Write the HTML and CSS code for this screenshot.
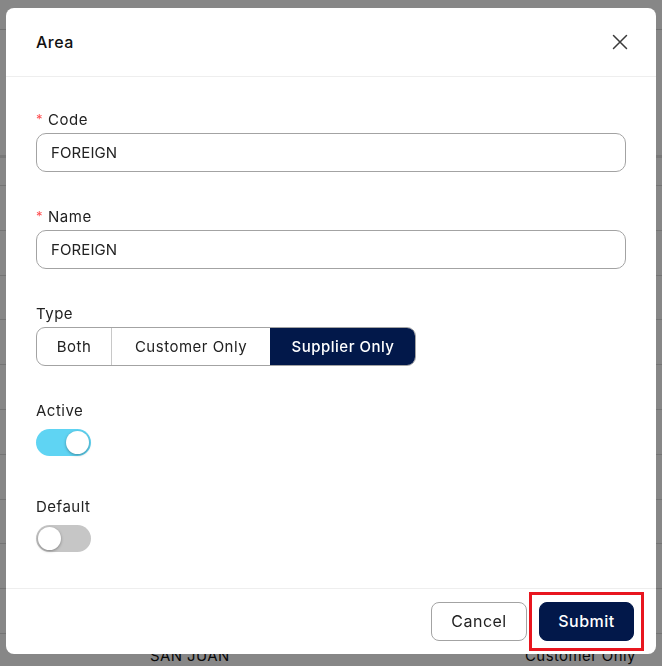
FILE: index.html
```html
<!DOCTYPE html>
<html lang="en">
<head>
<meta charset="utf-8">
<title>Area</title>
<link rel="stylesheet" href="styles.css">
</head>
<body>
<div class="page">
  <div class="page-head"><h1 class="page-title">Areas</h1></div>
  <div class="table">
    <div class="thead"></div>
    <div class="row row-first"></div>
    <div class="row"></div>
    <div class="row"></div>
    <div class="row"></div>
    <div class="row"></div>
    <div class="row"></div>
    <div class="row"></div>
    <div class="row"></div>
    <div class="row"></div>
    <div class="row"></div>
    <div class="row"></div>
    <div class="row row-last"><span class="cell-name">SAN JUAN</span><span class="cell-type">Customer Only</span></div>
  </div>
</div>

<div class="overlay"></div>

<div class="modal">
  <div class="modal-header">
    <span class="modal-title">Area</span>
    <svg class="close" width="16" height="16" viewBox="0 0 16 16"><path d="M1.5 1.5 L14.5 14.5 M14.5 1.5 L1.5 14.5" stroke="#3a3a3a" stroke-width="1.5" fill="none" stroke-linecap="round"/></svg>
  </div>
  <div class="modal-body">
    <div class="field">
      <label class="label"><span class="req">*</span>Code</label>
      <div class="input">FOREIGN</div>
    </div>
    <div class="field">
      <label class="label"><span class="req">*</span>Name</label>
      <div class="input">FOREIGN</div>
    </div>
    <div class="field">
      <label class="label">Type</label>
      <div class="segments">
        <span class="seg seg-both">Both</span>
        <span class="seg seg-customer">Customer Only</span>
        <span class="seg seg-supplier seg-on">Supplier Only</span>
      </div>
    </div>
    <div class="field field-switch">
      <label class="label">Active</label>
      <span class="switch switch-on"><span class="knob"></span></span>
    </div>
    <div class="field field-switch last">
      <label class="label">Default</label>
      <span class="switch"><span class="knob"></span></span>
    </div>
  </div>
  <div class="modal-footer">
    <button class="btn btn-cancel">Cancel</button>
    <button class="btn btn-submit">Submit</button>
  </div>
</div>
</body>
</html>
```
FILE: styles.css
```css
* { box-sizing: border-box; }
html, body { margin: 0; padding: 0; }
body {
  width: 662px;
  height: 666px;
  overflow: hidden;
  background: #fff;
  font-family: Inter, "Open Sans", sans-serif;
  color: #222;
}

.page-head {
  display: flow-root;
  height: 30px;
  border-bottom: 1px solid #d6d6d6;
}
.page-title {
  margin: -17px 0 0 48px;
  font-size: 20px;
  font-weight: 600;
  line-height: 20px;
  letter-spacing: 0.4px;
  color: #111;
}
.thead {
  height: 128px;
  border-bottom: 3px solid #e2e2e2;
}
.row {
  height: 44.8px;
  border-bottom: 1px solid #dcdcdc;
  display: flex;
  align-items: center;
  font-size: 15px;
  color: #111;
  letter-spacing: 0.4px;
}
.row-first { height: 28px; }
.row-last { height: 45px; }
.cell-name { margin-left: 150px; width: 375px; }

.overlay {
  position: fixed;
  inset: 0;
  background: rgba(0, 0, 0, 0.47);
}

.modal {
  position: fixed;
  left: 6px;
  top: 8px;
  width: 650px;
  height: 646px;
  background: #fff;
  border-radius: 8px;
  display: flex;
  flex-direction: column;
}
.modal-header {
  height: 69px;
  padding: 0 28px 0 30px;
  border-bottom: 1px solid #eee;
  display: flex;
  align-items: center;
  justify-content: space-between;
}
.modal-title {
  font-size: 16px;
  font-weight: 500;
  letter-spacing: 0.5px;
  color: #111;
}
.close { display: block; }

.modal-body {
  flex: 1;
  padding: 30px 30px 0 30px;
}
.field { margin-bottom: 32px; }
.field.last { margin-bottom: 0; }
.label {
  display: block;
  font-size: 15px;
  line-height: 22px;
  letter-spacing: 0.5px;
  color: #222;
  padding-top: 2px;
  margin-bottom: 2px;
}
.req {
  color: #ff4d4f;
  font-size: 13px;
  margin-right: 5px;
  position: relative;
  top: -1px;
}
.input {
  height: 39px;
  border: 1px solid #a3a3a3;
  border-radius: 10px;
  padding: 0 14px;
  display: flex;
  align-items: center;
  font-size: 15px;
  letter-spacing: 0.1px;
  color: #222;
}

.segments {
  display: inline-flex;
  height: 39px;
  border: 1px solid #a3a3a3;
  border-radius: 9px;
  overflow: hidden;
}
.seg {
  display: flex;
  align-items: center;
  justify-content: center;
  font-size: 15px;
  letter-spacing: 0.5px;
  color: #222;
  border-left: 1px solid #c8c8c8;
}
.seg-both { width: 74px; border-left: none; }
.seg-customer { width: 159px; }
.seg-supplier { width: 145px; }
.seg-on {
  background: #02184a;
  color: #fff;
  font-weight: 500;
  border-left-color: #02184a;
}

.field-switch .label { margin-bottom: 7px; }
.field-switch { margin-bottom: 38px; }
.switch {
  display: flex;
  align-items: center;
  width: 55px;
  height: 27px;
  border-radius: 14px;
  background: #c6c6c6;
  padding: 2px;
}
.switch-on {
  background: #5fd4f3;
  justify-content: flex-end;
}
.knob {
  width: 23px;
  height: 23px;
  border-radius: 50%;
  background: #fff;
  box-shadow: 0 1px 3px rgba(0,0,0,0.35);
}

.modal-footer {
  height: 66px;
  border-top: 1px solid #eee;
  display: flex;
  align-items: center;
  justify-content: flex-end;
  gap: 12px;
  padding: 0 22px 1px 0;
}
.btn {
  height: 39px;
  border-radius: 8px;
  font-family: inherit;
  font-size: 16px;
  letter-spacing: 0.5px;
  padding: 0;
  cursor: pointer;
}
.btn-cancel {
  width: 96px;
  background: #fff;
  border: 1px solid #a3a3a3;
  color: #222;
}
.btn-submit {
  position: relative;
  width: 95px;
  background: #02184a;
  border: 1px solid #02184a;
  color: #fff;
  font-weight: 500;
}
.btn-submit::after {
  content: "";
  position: absolute;
  left: -11px;
  top: -11px;
  right: -11px;
  bottom: -11px;
  border: 3px solid #e8161f;
}
```
